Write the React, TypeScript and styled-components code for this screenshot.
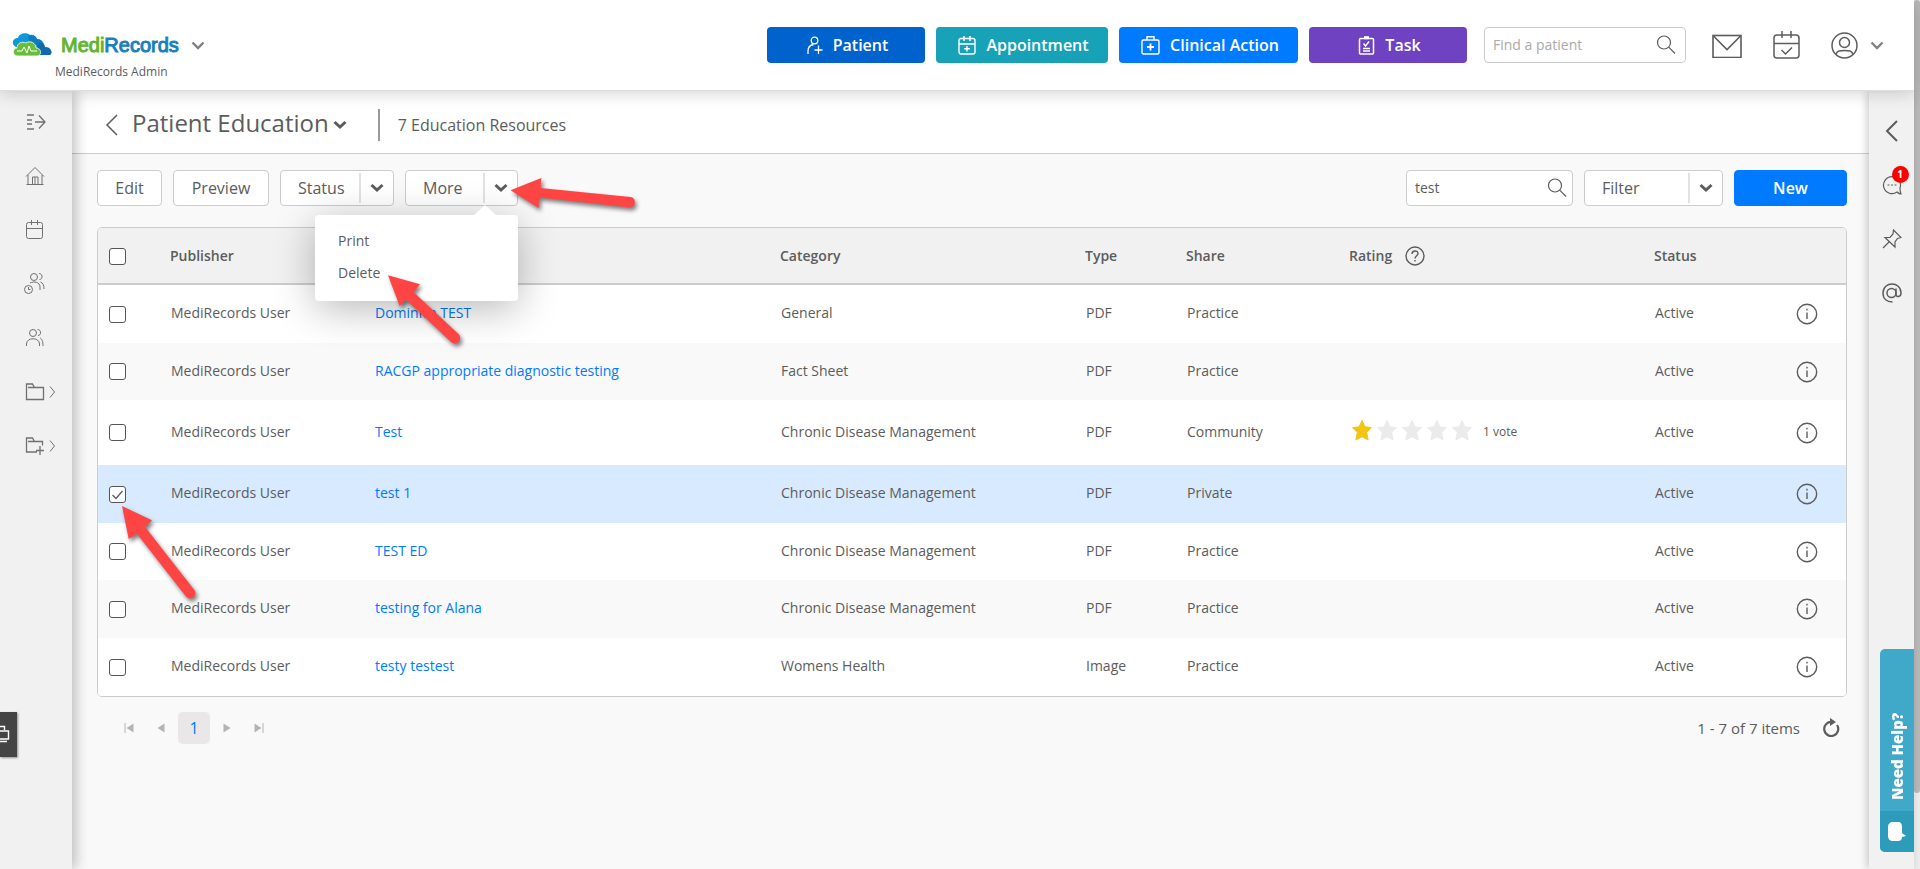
import React from 'react';
import styled, { createGlobalStyle } from 'styled-components';

const GlobalStyle = createGlobalStyle`
  *, *::before, *::after { box-sizing: border-box; }
  body {
    margin: 0;
    background: #f9f9f9;
    color: #5c5c5c;
    font-family: 'Open Sans', 'Noto Sans', sans-serif;
    font-size: 14px;
    font-weight: 500;
    line-height: 20px;
  }
  button, input { font: inherit; color: inherit; }
  button { padding: 0; border: 0; background: none; cursor: pointer; }
  a { color: #007bff; text-decoration: none; }
`;

const Shell = styled.div`
  display: flex;
  min-height: 100vh;
`;

const Page = styled.div`
  display: flex;
  flex: 1;
  flex-direction: column;
  min-width: 0;
`;

const ScrollTrack = styled.div`
  width: 6px;
  background: #ececec;
`;

const ScrollThumb = styled.div`
  height: 793px;
  max-height: 92%;
  border-radius: 3px;
  background: #b8b8b8;
`;

const TopBar = styled.header`
  position: relative;
  z-index: 3;
  display: flex;
  align-items: flex-start;
  height: 91px;
  padding: 27px 30px 0 12px;
  border-bottom: 1px solid #ddd;
  background: #fff;
  box-shadow: 0 2px 16px rgba(0, 0, 0, 0.18);
`;

const Brand = styled.div`
  display: flex;
  flex-direction: column;
  margin-right: auto;
`;

const BrandRow = styled.div`
  display: flex;
  align-items: center;
  height: 36px;
  margin-bottom: -1px;
`;

const BrandName = styled.span<{ $color: string }>`
  color: ${(p) => p.$color};
  font-family: 'Liberation Sans', Arial, sans-serif;
  font-size: 20px;
  font-weight: 400;
  line-height: 24px;
  -webkit-text-stroke: 1px ${(p) => p.$color};
`;

const BrandText = styled.span`
  margin: 0 12px 0 9px;
`;

const BrandSub = styled.span`
  padding-left: 43px;
  font-size: 12px;
`;

const Actions = styled.nav`
  display: flex;
  gap: 11px;
  margin-right: 17px;
`;

const ActionButton = styled.button<{ $bg: string; $width: number }>`
  display: flex;
  align-items: center;
  justify-content: center;
  gap: 10px;
  width: ${(p) => p.$width}px;
  height: 36px;
  padding-left: 3px;
  border-radius: 4px;
  background: ${(p) => p.$bg};
  color: #fff;
  font-size: 16px;
  font-weight: 600;
`;

const SearchBox = styled.label<{ $width: number; $inset: number }>`
  display: flex;
  align-items: center;
  width: ${(p) => p.$width}px;
  height: 36px;
  padding: 0 ${(p) => p.$inset}px 0 8px;
  border: 1px solid #ccc;
  border-radius: 4px;
  background: #fff;
`;

const SearchInput = styled.input`
  flex: 1;
  min-width: 0;
  padding: 0;
  border: 0;
  outline: 0;
  background: none;
  &::placeholder { color: #aaa; opacity: 1; }
`;

const TopIcons = styled.div`
  display: flex;
  align-items: center;
  gap: 31px;
  height: 36px;
  margin-left: 26px;
`;

const IconButton = styled.button`
  display: flex;
  align-items: center;
  gap: 12px;
`;

const Body = styled.div`
  display: flex;
  flex: 1;
`;

const LeftRail = styled.nav`
  position: relative;
  z-index: 2;
  display: flex;
  flex-direction: column;
  gap: 30px;
  width: 72px;
  padding: 19px 0 0 24px;
  background: #f1f1f1;
  box-shadow: 4px 0 12px rgba(0, 0, 0, 0.24);
`;

const RailLink = styled.a`
  display: flex;
  align-items: center;
  gap: 1px;
  height: 24px;
  color: #707070;
`;

const RightRail = styled.aside`
  position: relative;
  z-index: 2;
  display: flex;
  flex-direction: column;
  align-items: center;
  gap: 30px;
  width: 45px;
  padding-top: 28px;
  background: #f1f1f1;
  box-shadow: -2px 0 8px rgba(0, 0, 0, 0.2);
`;

const RailButton = styled.button`
  position: relative;
  display: flex;
  align-items: center;
  justify-content: center;
  width: 24px;
  height: 24px;
`;

const Badge = styled.span`
  position: absolute;
  top: -7px;
  right: -5px;
  width: 17px;
  height: 17px;
  border-radius: 50%;
  background: #f00;
  color: #fff;
  font-size: 10px;
  font-weight: 700;
  line-height: 17px;
  text-align: center;
`;

const Main = styled.main`
  flex: 1;
  min-width: 0;
`;

const TitleBar = styled.div`
  display: flex;
  align-items: center;
  height: 63px;
  padding: 6px 33px 0;
  border-bottom: 1px solid #ccc;
  background: #fff;
`;

const Title = styled.h1`
  margin: 0 4px 4px 14px;
  font-size: 24px;
  font-weight: 400;
  line-height: 30px;
`;

const Subtitle = styled.span`
  margin-left: 31px;
  padding-left: 18px;
  border-left: 2px solid #999;
  font-size: 16px;
  line-height: 32px;
`;

const Content = styled.div`
  padding: 16px 22px 0 25px;
`;

const Toolbar = styled.div`
  display: flex;
  gap: 11px;
  margin-bottom: 21px;
`;

const Spacer = styled.span`
  flex: 1;
`;

const ToolButton = styled.button<{ $width: number; $primary?: boolean }>`
  width: ${(p) => p.$width}px;
  height: 36px;
  border: 1px solid ${(p) => (p.$primary ? '#007bff' : '#ccc')};
  border-radius: 4px;
  background: ${(p) => (p.$primary ? '#007bff' : '#fff')};
  color: ${(p) => (p.$primary ? '#fff' : '#5c5c5c')};
  font-size: 16px;
  font-weight: ${(p) => (p.$primary ? 600 : 500)};
`;

const Split = styled.div<{ $width: number }>`
  position: relative;
  display: flex;
  align-items: center;
  width: ${(p) => p.$width}px;
  height: 36px;
  border: 1px solid #ccc;
  border-radius: 4px;
  background: #fff;
`;

const SplitMain = styled.button`
  flex: 1;
  height: 34px;
  padding-left: 17px;
  font-size: 16px;
  text-align: left;
`;

const SplitCaret = styled.button`
  display: flex;
  align-items: center;
  justify-content: center;
  width: 34px;
  height: 30px;
  border-left: 2px solid #e2e2e2;
`;

const Menu = styled.ul`
  position: absolute;
  z-index: 4;
  top: 44px;
  right: -1px;
  width: 203px;
  margin: 0;
  padding: 10px 0 12px;
  border-radius: 4px;
  background: #fff;
  box-shadow: 0 8px 40px rgba(0, 0, 0, 0.28);
  list-style: none;
  &::before {
    content: '';
    position: absolute;
    top: -10px;
    right: 22px;
    border: solid transparent;
    border-width: 0 11px 10px;
    border-bottom-color: #fff;
  }
`;

const MenuItem = styled.button`
  display: block;
  width: 100%;
  padding: 6px 23px;
  text-align: left;
`;

const TableFrame = styled.div`
  overflow: hidden;
  border: 1px solid #ccc;
  border-radius: 5px;
  background: #fff;
`;

const Table = styled.table`
  width: 100%;
  border-spacing: 0;
  table-layout: fixed;
`;

const HeadCell = styled.th`
  height: 57px;
  padding: 0 0 0 15px;
  border-bottom: 2px solid #ccc;
  background: #f1f1f1;
  font-weight: 600;
  text-align: left;
  &:first-child { padding-left: 11px; }
`;

const Row = styled.tr<{ $selected?: boolean }>`
  height: 58px;
  background: #fff;
  &:nth-child(3n + 2) { height: 57px; }
  &:nth-child(even) { background: #f9f9f9; }
  && { ${(p) => (p.$selected ? 'background: #d8eaff;' : '')} }
`;

const Cell = styled.td`
  padding: 0 0 2px 16px;
  &:first-child { padding-left: 11px; }
  &:last-child { padding-bottom: 0; }
`;

const WithIcon = styled.span`
  display: flex;
  align-items: center;
  gap: 13px;
`;

const Stars = styled.span`
  display: flex;
  align-items: center;
  gap: 5px;
  height: 63px;
  padding-left: 2px;
`;

const Votes = styled.small`
  margin-left: 6px;
  font-size: 12px;
`;

const CheckWrap = styled.span`
  display: grid;
  width: 17px;
  height: 17px;
  margin-top: 2px;
  > * { grid-area: 1 / 1; }
  > svg { pointer-events: none; }
`;

const CheckInput = styled.input`
  width: 17px;
  height: 17px;
  margin: 0;
  border: 1px solid #555;
  border-radius: 3px;
  background: #fff;
  appearance: none;
`;

const Pager = styled.div`
  display: flex;
  align-items: center;
  height: 32px;
  margin-top: 15px;
  padding: 0 7px 0 22px;
  font-size: 15px;
`;

const PageArrow = styled.button`
  display: flex;
  align-items: center;
  justify-content: center;
  width: 20px;
  height: 20px;
  margin-right: 12px;
  color: #b4b4b4;
`;

const PageNumber = styled.button`
  width: 32px;
  height: 32px;
  margin: 0 7px 0 -5px;
  border-radius: 5px;
  background: #e9e7e8;
  color: #007bff;
  font-size: 16px;
`;

const PagerInfo = styled.span`
  margin: 0 22px 0 auto;
`;

const SideTab = styled.button`
  position: fixed;
  z-index: 5;
  bottom: 112px;
  left: 0;
  width: 17px;
  height: 45px;
  background: #444;
  box-shadow: 1px 1px 2px rgba(0, 0, 0, 0.4);
  color: #fff;
`;

const HelpTab = styled.button`
  position: fixed;
  z-index: 5;
  right: 6px;
  bottom: 17px;
  display: flex;
  flex-direction: column;
  width: 34px;
  height: 203px;
  overflow: hidden;
  border-radius: 5px 0 0 5px;
  background: #40a8c8;
  color: #fff;
`;

const HelpText = styled.span`
  display: flex;
  align-items: center;
  justify-content: flex-start;
  width: 34px;
  height: 162px;
  padding-top: 11px;
  font-size: 15px;
  font-weight: 800;
  transform: rotate(180deg);
  writing-mode: vertical-rl;
`;

const HelpIcon = styled.span`
  display: flex;
  align-items: center;
  justify-content: center;
  width: 34px;
  height: 41px;
  background: #2d9bba;
`;

const Markup = styled.svg`
  position: absolute;
  z-index: 6;
  top: 0;
  left: 0;
  pointer-events: none;
  filter: drop-shadow(2px 3px 2px rgba(0, 0, 0, 0.5));
`;

type IconProps = { w: number; h?: number; sw?: number; children: React.ReactNode };

function Icon({ w, h = w, sw = 1, children }: IconProps) {
  return (
    <svg
      width={w}
      height={h}
      viewBox={`0 0 ${w} ${h}`}
      fill="none"
      stroke="currentColor"
      strokeWidth={sw}
      aria-hidden="true"
    >
      {children}
    </svg>
  );
}

const Chevron = () => (
  <Icon w={14} h={10} sw={3}><path d="M1.500 2l5.500 5 5.500-5" /></Icon>
);
const ThinChevron = () => (
  <Icon w={14} h={10} sw={2.4}><path d="M1.500 2.500l5.500 5.500L12.500 2.500" stroke="#808080" /></Icon>
);
const BackChevron = ({ sw = 1.5 }: { sw?: number }) => (
  <Icon w={13} h={22} sw={sw}><path d="M12 1L2 11l10 10" /></Icon>
);
const Magnifier = () => (
  <Icon w={20} sw={1.2}><circle cx="8" cy="7.500" r="6.500" /><path d="M12.700 12.200L19 18.500" /></Icon>
);
const InfoIcon = () => (
  <Icon w={22} sw={1.4}>
    <circle cx="11" cy="11" r="9.700" />
    <path d="M11 9.500v6.500" />
    <path d="M11 5.800v1.600" />
  </Icon>
);
const SmallRight = () => (
  <Icon w={7} h={14}><path d="M1 1.500l4.500 5.500L1 12.500" /></Icon>
);

const CloudLogo = () => (
  <svg width="40" height="24" viewBox="0 0 40 24" aria-hidden="true">
    <path d="M4 14C-1 12 0 5 6 5c1-5 9-6 12-3 3-1 6 1 7 4 4 0 6 3 7 5l-8 8z" fill="#0d9ad8" />
    <path d="M16 3c4-2 8 0 9 3 4 0 6 3 6 5l-13 2z" fill="#0b7cbd" />
    <path d="M25 12c3-4 8-2 8 2 5-1 9 6 5 8H27z" fill="#0f6cab" />
    <path d="M6 23c-6 0-6-8-1-8 0-5 5-7 9-5 4-3 10 0 10 5 6 0 6 8 1 8z" fill="#6abf3a" stroke="#fff" strokeWidth=".8" />
    <path d="M5 18h5l2-4 3 6 2-7 2 5h6" fill="none" stroke="#fff" strokeWidth="1" />
  </svg>
);

function Checkbox({ label, checked = false }: { label: string; checked?: boolean }) {
  return (
    <CheckWrap>
      <CheckInput type="checkbox" aria-label={label} defaultChecked={checked} />
      {checked && <Icon w={17} sw={1.3}><path d="M3.500 9l3.500 3.500L13.500 5" /></Icon>}
    </CheckWrap>
  );
}

const Star = ({ on }: { on: boolean }) => (
  <svg width="20" height="24" viewBox="0 0 20 24" aria-hidden="true">
    <path
      d="M10 .5l2.900 6.300 6.600.8-4.800 4.900 1.400 7.400L10 16.700 3.900 20l1.400-7.500L.5 7.600l6.600-.8z"
      fill={on ? '#f3c513' : '#ebebeb'}
      stroke={on ? '#f3c513' : '#ebebeb'}
      strokeLinejoin="round"
    />
  </svg>
);

const actions = [
  {
    label: 'Patient', bg: '#0062cc', width: 158,
    icon: <Icon w={16} h={20} sw={1.3}><circle cx="7.500" cy="5.500" r="3.300" /><path d="M1 19v-3c0-4 2.500-6 5.500-6.500M11.500 10.500v8.500M7.500 15h8" /></Icon>,
  },
  {
    label: 'Appointment', bg: '#17a2b8', width: 172,
    icon: <Icon w={18} h={20} sw={1.4}><rect x="1" y="3.500" width="16" height="15.500" rx="2" /><path d="M1 9h16M6 1v5M12 1v5M9 11v5.500M6.200 13.700h5.600" /></Icon>,
  },
  {
    label: 'Clinical Action', bg: '#007bff', width: 179,
    icon: <Icon w={19} h={20} sw={1.4}><rect x="1" y="5" width="17" height="14" rx="1.500" /><path d="M6 5V1.700h7V5" /><path d="M9.500 8.500v7M6 12h7" strokeWidth="1.800" /></Icon>,
  },
  {
    label: 'Task', bg: '#6f42c1', width: 158,
    icon: <Icon w={17} h={20} sw={1.5}><rect x="1.500" y="3.500" width="14" height="15.500" rx="1" /><path d="M6 2.700h5" strokeWidth="3" /><path d="M5.500 8.500l2 2.500 3.500-4.500M5 13.500h7M5 16h7" /></Icon>,
  },
];

const railItems = [
  { label: 'Expand menu', icon: <Icon w={24} sw={1.3}><path d="M3 5h7M3 10h5M3 14h5M3 19h7M11 12h10M15 5.500l6 6.500-6 6.500" /></Icon> },
  { label: 'Home', icon: <Icon w={24}><path d="M2.500 20.500h17M4 20v-9M18 20v-9M2 12.500l9-9 9 9M8.500 20v-7h2.500v7M11 13h3v7" /></Icon> },
  { label: 'Calendar', icon: <Icon w={24}><rect x="2.500" y="4.500" width="16" height="16" rx="2" /><path d="M2.500 10.500h16M7.500 2v5M13.500 2v5" /></Icon> },
  { label: 'Waiting room', icon: <Icon w={24}><circle cx="10" cy="5" r="3.500" /><path d="M15 1.500c4 0 4 6 .5 6M6 11c4-2 10-1 10 4v3M16.500 10c2.500 1 3.500 3 3.500 7" /><circle cx="4.500" cy="17.500" r="4" /><path d="M4.500 15v2.500h2" /></Icon> },
  { label: 'Patients', icon: <Icon w={24}><circle cx="9" cy="7" r="3.500" /><path d="M13.500 3.500c4 0 4 6 .5 6M2.500 20v-2c0-7 13-7 13 0v2M16 12c2 1 3 3 3 8" /></Icon> },
  { label: 'Files', more: true, icon: <Icon w={24} sw={1.3}><path d="M2.500 19.500V4h6l2 3.500h9v12zM4 7.500h6" /></Icon> },
  { label: 'Add folder', more: true, icon: <Icon w={24} sw={1.3}><path d="M13 18H2.500V4h6l2 3.500h8v4M4 7.500h6M16 12v9M12 16.500h8" /></Icon> },
];

const rows = [
  { name: 'Dominica TEST', category: 'General', type: 'PDF', share: 'Practice' },
  { name: 'RACGP appropriate diagnostic testing', category: 'Fact Sheet', type: 'PDF', share: 'Practice' },
  { name: 'Test', category: 'Chronic Disease Management', type: 'PDF', share: 'Community', stars: 1 },
  { name: 'test 1', category: 'Chronic Disease Management', type: 'PDF', share: 'Private', selected: true },
  { name: 'TEST ED', category: 'Chronic Disease Management', type: 'PDF', share: 'Practice' },
  { name: 'testing for Alana', category: 'Chronic Disease Management', type: 'PDF', share: 'Practice' },
  { name: 'testy testest', category: 'Womens Health', type: 'Image', share: 'Practice' },
];

const columnWidths = [57, 204, undefined, 305, 101, 163, 305, 141, 66];

function SplitButton({ label, width, children }: { label: string; width: number; children?: React.ReactNode }) {
  return (
    <Split $width={width}>
      <SplitMain>{label}</SplitMain>
      <SplitCaret aria-label={`${label} options`}><Chevron /></SplitCaret>
      {children}
    </Split>
  );
}

export default function App() {
  return (
    <>
      <GlobalStyle />
      <Shell>
        <Page>
          <TopBar>
            <Brand>
              <BrandRow>
                <CloudLogo />
                <BrandText>
                  <BrandName $color="#62b52e">Medi</BrandName>
                  <BrandName $color="#1a80bd">Records</BrandName>
                </BrandText>
                <ThinChevron />
              </BrandRow>
              <BrandSub>MediRecords Admin</BrandSub>
            </Brand>
            <Actions>
              {actions.map((a) => (
                <ActionButton key={a.label} $bg={a.bg} $width={a.width}>
                  {a.icon}
                  {a.label}
                </ActionButton>
              ))}
            </Actions>
            <SearchBox $width={202} $inset={9}>
              <SearchInput placeholder="Find a patient" aria-label="Find a patient" />
              <Magnifier />
            </SearchBox>
            <TopIcons>
              <IconButton aria-label="Messages">
                <Icon w={30} h={26} sw={1.6}><rect x="1" y="3.500" width="28" height="22" /><path d="M1.500 4L15 17.500 28.500 4" /></Icon>
              </IconButton>
              <IconButton aria-label="Calendar">
                <Icon w={27} h={28} sw={1.5}><rect x="1" y="4" width="25" height="23" rx="3" /><path d="M1 12.500h25M9 0v7M18 0v7M8.500 19l4 4 6.500-6.500" /></Icon>
              </IconButton>
              <IconButton aria-label="Account">
                <Icon w={27} sw={1.5}><circle cx="13.500" cy="13.500" r="12.500" /><circle cx="13.500" cy="10.500" r="5" /><path d="M5 22.500c1-4 4-4 8.500-4s7.500 0 8.500 4" /></Icon>
                <ThinChevron />
              </IconButton>
            </TopIcons>
          </TopBar>
          <Body>
            <LeftRail>
              {railItems.map((item) => (
                <RailLink key={item.label} href="#" aria-label={item.label}>
                  {item.icon}
                  {item.more && <SmallRight />}
                </RailLink>
              ))}
            </LeftRail>
            <Main>
              <TitleBar>
                <IconButton aria-label="Back"><BackChevron /></IconButton>
                <Title>Patient Education</Title>
                <IconButton aria-label="Switch section"><Chevron /></IconButton>
                <Subtitle>7 Education Resources</Subtitle>
              </TitleBar>
              <Content>
                <Toolbar>
                  <ToolButton $width={65}>Edit</ToolButton>
                  <ToolButton $width={96}>Preview</ToolButton>
                  <SplitButton label="Status" width={114} />
                  <SplitButton label="More" width={113}>
                    <Menu>
                      <li><MenuItem>Print</MenuItem></li>
                      <li><MenuItem>Delete</MenuItem></li>
                    </Menu>
                  </SplitButton>
                  <Spacer />
                  <SearchBox $width={167} $inset={5}>
                    <SearchInput defaultValue="test" aria-label="Search resources" />
                    <Magnifier />
                  </SearchBox>
                  <SplitButton label="Filter" width={139} />
                  <ToolButton $width={113} $primary>New</ToolButton>
                </Toolbar>
                <TableFrame>
                  <Table>
                    <colgroup>
                      {columnWidths.map((w, i) => <col key={i} width={w} />)}
                    </colgroup>
                    <thead>
                      <tr>
                        <HeadCell><Checkbox label="Select all" /></HeadCell>
                        <HeadCell>Publisher</HeadCell>
                        <HeadCell>Name</HeadCell>
                        <HeadCell>Category</HeadCell>
                        <HeadCell>Type</HeadCell>
                        <HeadCell>Share</HeadCell>
                        <HeadCell>
                          <WithIcon>
                            Rating
                            <Icon w={20} sw={1.4}><circle cx="10" cy="10" r="9" /><path d="M7 8c0-4 6-4 6-.5 0 2-3 2.500-3 5M10 14v1.500" /></Icon>
                          </WithIcon>
                        </HeadCell>
                        <HeadCell>Status</HeadCell>
                        <HeadCell aria-label="Details" />
                      </tr>
                    </thead>
                    <tbody>
                      {rows.map((r) => (
                        <Row key={r.name} $selected={r.selected}>
                          <Cell><Checkbox label={`Select ${r.name}`} checked={r.selected} /></Cell>
                          <Cell>MediRecords User</Cell>
                          <Cell><a href="#">{r.name}</a></Cell>
                          <Cell>{r.category}</Cell>
                          <Cell>{r.type}</Cell>
                          <Cell>{r.share}</Cell>
                          <Cell>
                            {r.stars && (
                              <Stars>
                                {[1, 2, 3, 4, 5].map((n) => <Star key={n} on={n <= r.stars} />)}
                                <Votes>1 vote</Votes>
                              </Stars>
                            )}
                          </Cell>
                          <Cell>Active</Cell>
                          <Cell><IconButton aria-label={`Details of ${r.name}`}><InfoIcon /></IconButton></Cell>
                        </Row>
                      ))}
                    </tbody>
                  </Table>
                </TableFrame>
                <Pager>
                  <PageArrow aria-label="First page"><Icon w={10}><path d="M1 0v10" /><path d="M9.500 .5v9L2.500 5z" fill="currentColor" stroke="none" /></Icon></PageArrow>
                  <PageArrow aria-label="Previous page"><Icon w={10}><path d="M8.500 .5v9L1.500 5z" fill="currentColor" stroke="none" /></Icon></PageArrow>
                  <PageNumber>1</PageNumber>
                  <PageArrow aria-label="Next page"><Icon w={10}><path d="M1.500 .5v9L8.500 5z" fill="currentColor" stroke="none" /></Icon></PageArrow>
                  <PageArrow aria-label="Last page"><Icon w={10}><path d="M9 0v10" /><path d="M.5 .5v9L7.500 5z" fill="currentColor" stroke="none" /></Icon></PageArrow>
                  <PagerInfo>1 - 7 of 7 items</PagerInfo>
                  <IconButton aria-label="Refresh">
                    <Icon w={18} h={20} sw={2.2}><path d="M10 4A7 7 0 1 0 15 7" /><path d="M8 0v8L14 4z" fill="currentColor" stroke="none" /></Icon>
                  </IconButton>
                </Pager>
              </Content>
            </Main>
            <RightRail>
              <RailButton aria-label="Open panel"><BackChevron sw={2} /></RailButton>
              <RailButton aria-label="Chat">
                <Icon w={20} sw={1.2}><path d="M15 17a8.500 8.500 0 1 1 3-4c0 2 0 4 1 6-2 0-3-1-4-2z" /><path d="M5.500 10h2M9 10h2M12.500 10h2" /></Icon>
                <Badge>1</Badge>
              </RailButton>
              <RailButton aria-label="Pinned">
                <Icon w={20} sw={1.2}><path d="M11.500 1l7.500 7.500-3.500 1L13 13v5L3 8.500h5l3-3.500zM7 13l-6 6" /></Icon>
              </RailButton>
              <RailButton aria-label="Mentions">
                <Icon w={20} sw={1.5}><circle cx="9.500" cy="10" r="4.500" /><path d="M14 5.500v6c0 3 5 3 5-1.500C19-2 1-2 1 10c0 6 4 9 9.500 9" /></Icon>
              </RailButton>
            </RightRail>
          </Body>
        </Page>
        <ScrollTrack><ScrollThumb /></ScrollTrack>
      </Shell>
      <SideTab aria-label="Remote screen">
        <Icon w={17} h={45} sw={1.4}><path d="M0 14.500h4.500V18M0 19h8.500v8H0M0 29.500h7" /></Icon>
      </SideTab>
      <HelpTab>
        <HelpText>Need Help?</HelpText>
        <HelpIcon>
          <Icon w={18} h={20}><path d="M5 0h5c3 0 4 2 4 5v6l4 3-4 1c0 3-2 4-4 4H5c-3 0-5-2-5-5V5c0-3 2-5 5-5z" fill="#fff" stroke="none" /></Icon>
        </HelpIcon>
      </HelpTab>
      <Markup width="700" height="640" viewBox="0 0 700 640" fill="#ff4444" aria-hidden="true">
        <path d="M510.500 190.300L541.300 178l-.8 10L630.500 197a5.300 5.300 0 0 1-.8 10.500L539.300 197.500 538.600 208z" />
        <path d="M388 275.300L420 284.300l-6.300 8L458.500 334a5.300 5.300 0 0 1-7.400 8L406.300 299.700 399.700 306z" />
        <path d="M122 506l30 14.300-6.700 7L194.300 590a5.200 5.200 0 0 1-8.300 6.400L137 533.700l-8.300 5.300z" />
      </Markup>
    </>
  );
}
